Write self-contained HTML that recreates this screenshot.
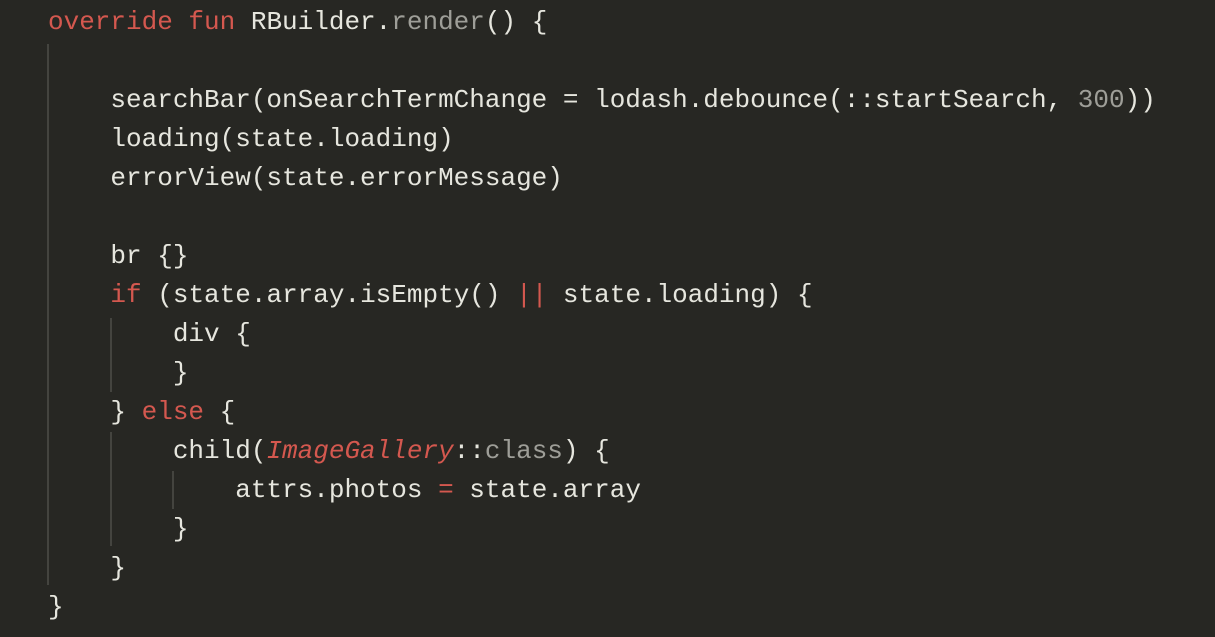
<!DOCTYPE html>
<html><head><style>
html,body{margin:0;padding:0;background:#272723;width:1215px;height:637px;overflow:hidden}
pre{margin:0;position:absolute;left:48px;top:3px;font-family:"Liberation Mono","DejaVu Sans Mono",monospace;font-size:26px;line-height:39px;color:#e6e6de}
.k{color:#d4584f}.g{color:#9e9e98}.i{color:#d4584f;font-style:italic}
.v{position:absolute;width:2px;background:#44443f}
</style></head><body>
<div class="v" style="left:47px;top:44px;height:541px"></div>
<div class="v" style="left:110px;top:318px;height:74px"></div>
<div class="v" style="left:110px;top:432px;height:114px"></div>
<div class="v" style="left:172px;top:471px;height:38px"></div>
<pre><span class="k">override fun</span> RBuilder.<span class="g">render</span>() {

    searchBar(onSearchTermChange = lodash.debounce(::startSearch, <span class="g">300</span>))
    loading(state.loading)
    errorView(state.errorMessage)

    br {}
    <span class="k">if</span> (state.array.isEmpty() <span class="k">||</span> state.loading) {
        div {
        }
    } <span class="k">else</span> {
        child(<span class="i">ImageGallery</span>::<span class="g">class</span>) {
            attrs.photos <span class="k">=</span> state.array
        }
    }
}</pre>
</body></html>
